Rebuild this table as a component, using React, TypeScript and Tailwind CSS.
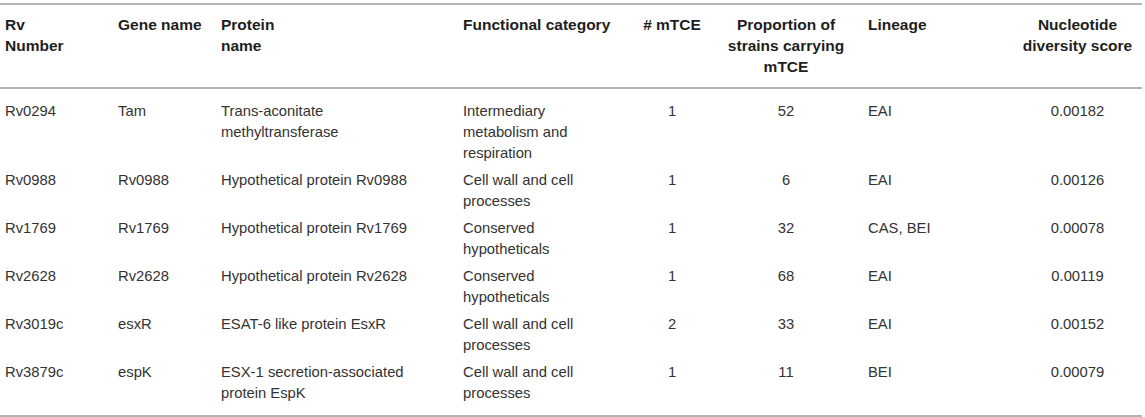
type Row = {
  rv: string
  gene: string
  protein: string
  category: string
  mtce: string
  proportion: string
  lineage: string
  diversity: string
}

const rows: Row[] = [
  { rv: "Rv0294", gene: "Tam", protein: "Trans-aconitate methyltransferase", category: "Intermediary metabolism and respiration", mtce: "1", proportion: "52", lineage: "EAI", diversity: "0.00182" },
  { rv: "Rv0988", gene: "Rv0988", protein: "Hypothetical protein Rv0988", category: "Cell wall and cell processes", mtce: "1", proportion: "6", lineage: "EAI", diversity: "0.00126" },
  { rv: "Rv1769", gene: "Rv1769", protein: "Hypothetical protein Rv1769", category: "Conserved hypotheticals", mtce: "1", proportion: "32", lineage: "CAS, BEI", diversity: "0.00078" },
  { rv: "Rv2628", gene: "Rv2628", protein: "Hypothetical protein Rv2628", category: "Conserved hypotheticals", mtce: "1", proportion: "68", lineage: "EAI", diversity: "0.00119" },
  { rv: "Rv3019c", gene: "esxR", protein: "ESAT-6 like protein EsxR", category: "Cell wall and cell processes", mtce: "2", proportion: "33", lineage: "EAI", diversity: "0.00152" },
  { rv: "Rv3879c", gene: "espK", protein: "ESX-1 secretion-associated protein EspK", category: "Cell wall and cell processes", mtce: "1", proportion: "11", lineage: "BEI", diversity: "0.00079" },
]

export default function App() {
  return (
    <div className="bg-white pt-[3px] font-['Liberation_Sans',Arial,sans-serif]">
      <table className="w-[1142px] table-fixed border-collapse">
        <colgroup>
          <col className="w-[113px]" />
          <col className="w-[103px]" />
          <col className="w-[242px]" />
          <col className="w-[162px]" />
          <col className="w-[104px]" />
          <col className="w-[124px]" />
          <col className="w-[165px]" />
          <col className="w-[129px]" />
        </colgroup>
        <thead>
          <tr className="border-y-2 border-[#b4b4b4] align-top text-[15.5px] leading-[21px] font-bold text-[#1e1e1e]">
            <th className="pt-[9px] pb-[10px] pl-[5px] text-left font-bold">Rv<br />Number</th>
            <th className="pt-[9px] pb-[10px] pl-[5px] text-left font-bold">Gene name</th>
            <th className="pt-[9px] pb-[10px] pl-[5px] text-left font-bold">Protein<br />name</th>
            <th className="pt-[9px] pb-[10px] pl-[5px] text-left font-bold">Functional category</th>
            <th className="pt-[9px] pb-[10px] text-center font-bold"># mTCE</th>
            <th className="pt-[9px] pb-[10px] text-center font-bold">Proportion of<br />strains carrying<br />mTCE</th>
            <th className="pt-[9px] pb-[10px] pl-[20px] text-left font-bold">Lineage</th>
            <th className="pt-[9px] pb-[10px] text-center font-bold">Nucleotide<br />diversity score</th>
          </tr>
        </thead>
        <tbody className="border-b-2 border-[#b4b4b4] text-[14.8px] leading-[21px] text-[#333]">
          {rows.map((r, i) => {
            const first = i === 0
            const last = i === rows.length - 1
            const pad = first ? "pt-[11.5px] pb-[3px]" : last ? "pt-[3px] pb-[11.5px]" : "py-[3px]"
            return (
              <tr key={r.rv} className="align-top">
                <td className={`${pad} pl-[5px]`}>{r.rv}</td>
                <td className={`${pad} pl-[5px]`}>{r.gene}</td>
                <td className={`${pad} pl-[5px] pr-[40px]`}>{r.protein}</td>
                <td className={`${pad} pl-[5px] pr-[37px]`}>{r.category}</td>
                <td className={`${pad} text-center`}>{r.mtce}</td>
                <td className={`${pad} text-center`}>{r.proportion}</td>
                <td className={`${pad} pl-[20px]`}>{r.lineage}</td>
                <td className={`${pad} text-center`}>{r.diversity}</td>
              </tr>
            )
          })}
        </tbody>
      </table>
    </div>
  )
}
